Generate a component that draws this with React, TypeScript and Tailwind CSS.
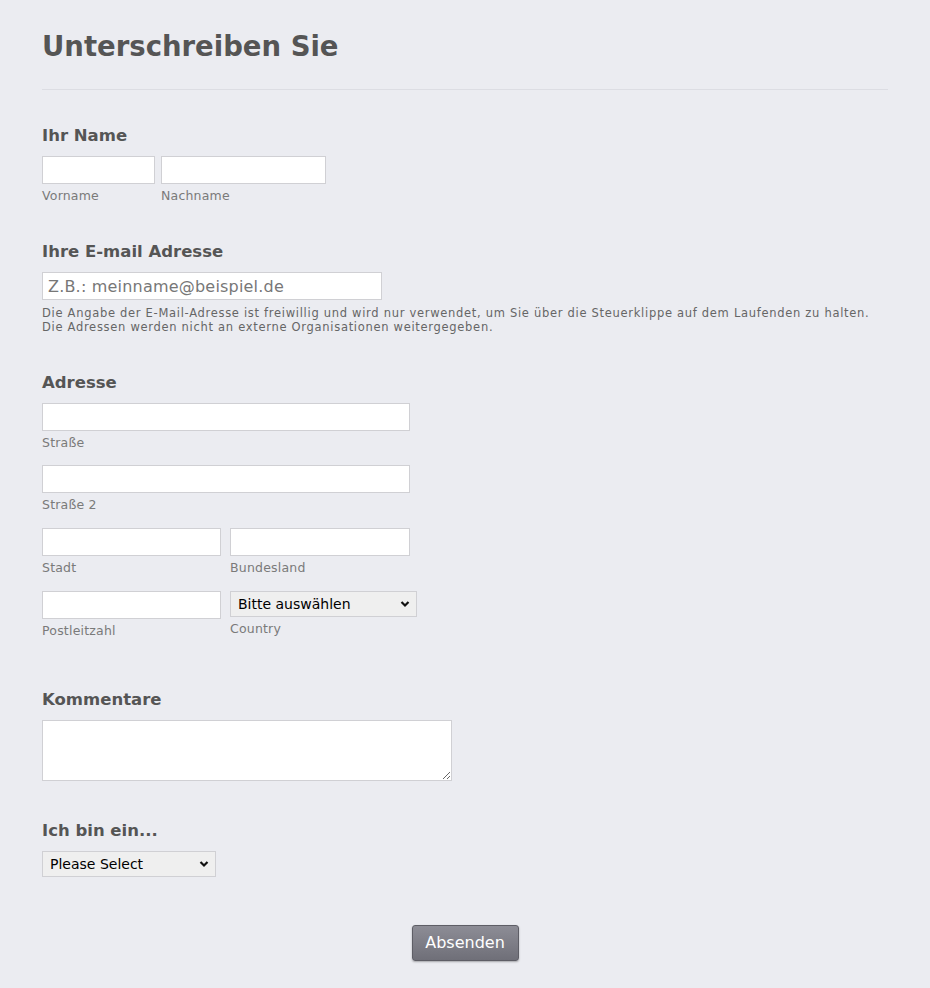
import React from "react";

const input = "block h-[28px] border border-[#d0d0d4] bg-white outline-none";
const heading = "text-[16.5px] leading-[20px] font-bold text-[#555]";
const sub = "mt-[4px] text-[12.5px] leading-[16px] text-[#7a7a7a] tracking-[0.2px]";

function Chevron() {
    return (
        <svg width="10" height="8" viewBox="0 0 10 8" className="absolute right-[7px] top-1/2 -translate-y-1/2 pointer-events-none">
            <path d="M1.5 2 L5 5.5 L8.5 2" fill="none" stroke="#111" strokeWidth="2.2" />
        </svg>
    );
}

function Select({ label, width }: { label: string; width: string }) {
    return (
        <div className={`relative ${width}`}>
            <select className="block h-[26px] w-full appearance-none border border-[#d0d0d4] bg-[#efefef] pl-[7px] text-[14px] text-black outline-none">
                <option>{label}</option>
            </select>
            <Chevron />
        </div>
    );
}

export default function App() {
    return (
        <div className="min-h-[988px] bg-[#ebecf1] px-[42px] pt-[26px] font-['DejaVu_Sans',sans-serif]">
            <h1 className="text-[27.5px] leading-[40px] font-bold text-[#555]">Unterschreiben Sie</h1>
            <div className="mt-[23px] h-px bg-[#dcdde3]" />

            {/* Name */}
            <div className="mt-[36px]">
                <div className={heading}>Ihr Name</div>
                <div className="mt-[10px] flex gap-[6px]">
                    <div>
                        <input className={`${input} w-[113px]`} />
                        <div className={sub}>Vorname</div>
                    </div>
                    <div>
                        <input className={`${input} w-[165px]`} />
                        <div className={sub}>Nachname</div>
                    </div>
                </div>
            </div>

            {/* E-mail */}
            <div className="mt-[38px]">
                <div className={heading}>Ihre E-mail Adresse</div>
                <input
                    className={`${input} mt-[10px] w-[340px] px-[5px] text-[16px] tracking-[0.2px] placeholder:text-[#777]`}
                    placeholder="Z.B.: meinname@beispiel.de"
                />
                <p className="mt-[6px] text-[11.5px] leading-[14px] text-[#666] tracking-[0.7px]">
                    Die Angabe der E-Mail-Adresse ist freiwillig und wird nur verwendet, um Sie über die Steuerklippe auf dem Laufenden zu halten.
                    <br />
                    Die Adressen werden nicht an externe Organisationen weitergegeben.
                </p>
            </div>

            {/* Adresse */}
            <div className="mt-[39px]">
                <div className={heading}>Adresse</div>
                <div className="mt-[10px]">
                    <input className={`${input} w-[368px]`} />
                    <div className={sub}>Straße</div>
                </div>
                <div className="mt-[14px]">
                    <input className={`${input} w-[368px]`} />
                    <div className={sub}>Straße 2</div>
                </div>
                <div className="mt-[15px] flex gap-[9px]">
                    <div>
                        <input className={`${input} w-[179px]`} />
                        <div className={sub}>Stadt</div>
                    </div>
                    <div>
                        <input className={`${input} w-[180px]`} />
                        <div className={sub}>Bundesland</div>
                    </div>
                </div>
                <div className="mt-[15px] flex gap-[9px]">
                    <div>
                        <input className={`${input} w-[179px]`} />
                        <div className={sub}>Postleitzahl</div>
                    </div>
                    <div>
                        <Select label="Bitte auswählen" width="w-[187px]" />
                        <div className={sub}>Country</div>
                    </div>
                </div>
            </div>

            {/* Kommentare */}
            <div className="mt-[51px]">
                <div className={heading}>Kommentare</div>
                <textarea className="mt-[10px] block h-[61px] w-[410px] border border-[#d0d0d4] bg-white outline-none" />
            </div>

            {/* Ich bin ein */}
            <div className="mt-[40px]">
                <div className={heading}>Ich bin ein...</div>
                <div className="mt-[10px]">
                    <Select label="Please Select" width="w-[174px]" />
                </div>
            </div>

            <div className="mt-[48px] flex justify-center pb-[27px]">
                <button className="h-[36px] w-[107px] rounded-[3px] border border-[#5e5e66] bg-gradient-to-b from-[#8d8d96] to-[#6f6f78] text-[16px] text-white shadow-[0_1px_2px_rgba(0,0,0,0.3)]">
                    Absenden
                </button>
            </div>
        </div>
    );
}
